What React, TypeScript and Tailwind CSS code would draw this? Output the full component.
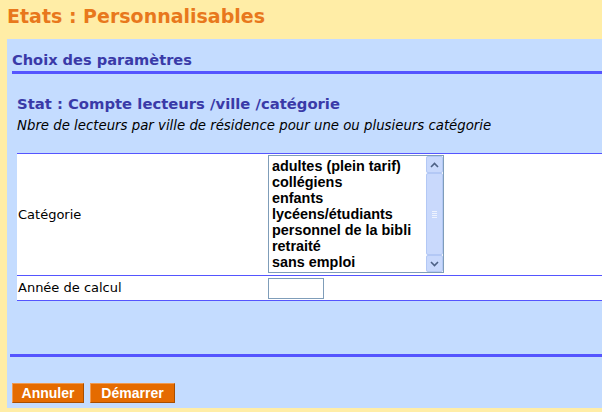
import React from "react";

const items = [
  "adultes (plein tarif)",
  "collégiens",
  "enfants",
  "lycéens/étudiants",
  "personnel de la bibli",
  "retraité",
  "sans emploi",
];

function ScrollBtn({ up }: { up?: boolean }) {
  return (
    <div className="h-[17px] w-[17px] rounded-[2px] border border-[#b3c8f5] bg-[#c9d9fc] flex items-center justify-center">
      <svg width="9" height="6" viewBox="0 0 9 6">
        <path
          d={up ? "M1 5 L4.5 1.5 L8 5" : "M1 1 L4.5 4.5 L8 1"}
          fill="none"
          stroke="#4d6185"
          strokeWidth="1.6"
        />
      </svg>
    </div>
  );
}

export default function App() {
  const verdana = { fontFamily: '"DejaVu Sans", Verdana, sans-serif' };
  return (
    <div className="w-[602px] h-[412px] bg-[#ffeda6] flex flex-col overflow-hidden" style={verdana}>
      <div className="h-[39px] pl-[7px] pt-[4px] text-[19px] font-bold text-[#e8781c] leading-[24px]">
        Etats : Personnalisables
      </div>
      <div className="ml-[7px] h-[369px] bg-[#c4dcff] flex flex-col">
        <div className="ml-[5px] mt-[12px] h-[23px] border-b-[3px] border-[#5555ff] text-[14.6px] font-bold text-[#3a3aa8] leading-[18px]">
          Choix des paramètres
        </div>
        <div className="ml-[10px] mt-[21px] text-[14.8px] font-bold text-[#3a3aa8] leading-[18px]">
          Stat : Compte lecteurs /ville /catégorie
        </div>
        <div className="ml-[10px] mt-[5px] text-[13.3px] italic text-black leading-[16px]">
          Nbre de lecteurs par ville de résidence pour une ou plusieurs catégorie
        </div>
        <div className="ml-[10px] mt-[19px] bg-white border-t border-[#5555ff]">
          <div className="flex h-[122px] border-b border-[#5555ff]">
            <div className="w-[251px] pl-[1px] flex items-center text-[13px] text-black">Catégorie</div>
            <div className="pt-[1px]">
              <div className="w-[176px] h-[118px] border border-[#7f9db9] flex bg-white">
                <div
                  className="flex-1 pl-[3px] pt-[2px] text-[14.4px] font-bold text-black leading-[16px]"
                  style={{ fontFamily: '"Liberation Sans", Arial, sans-serif' }}
                >
                  {items.map((t) => (
                    <div key={t} className="whitespace-nowrap">{t}</div>
                  ))}
                </div>
                <div className="w-[17px] bg-[#f3f6fd] flex flex-col">
                  <ScrollBtn up />
                  <div className="flex-1 rounded-[2px] border border-[#b3c8f5] bg-[#c9d9fc] flex items-center justify-center">
                    <div className="flex flex-col gap-[1px]">
                      <div className="w-[5px] h-px bg-[#eef3fe]" />
                      <div className="w-[5px] h-px bg-[#eef3fe]" />
                      <div className="w-[5px] h-px bg-[#eef3fe]" />
                      <div className="w-[5px] h-px bg-[#eef3fe]" />
                    </div>
                  </div>
                  <ScrollBtn />
                </div>
              </div>
            </div>
          </div>
          <div className="flex h-[25px] border-b border-[#5555ff] items-center">
            <div className="w-[251px] pl-[1px] text-[13px] text-black">Année de calcul</div>
            <div className="w-[56px] h-[21px] border border-[#7f9db9] bg-white" />
          </div>
        </div>
        <div className="ml-[3px] mt-[53px] h-[3px] bg-[#5555ff]" />
        <div
          className="ml-[5px] mt-[26px] flex gap-[6px]"
          style={{ fontFamily: '"Liberation Sans", Arial, sans-serif' }}
        >
          <div className="w-[72px] h-[20px] bg-[#e56b00] border border-[#a84e00] border-t-[#f09a50] border-l-[#f09a50] text-white font-bold text-[14px] flex items-center justify-center">
            Annuler
          </div>
          <div className="w-[85px] h-[20px] bg-[#e56b00] border border-[#a84e00] border-t-[#f09a50] border-l-[#f09a50] text-white font-bold text-[14px] flex items-center justify-center">
            Démarrer
          </div>
        </div>
      </div>
    </div>
  );
}
